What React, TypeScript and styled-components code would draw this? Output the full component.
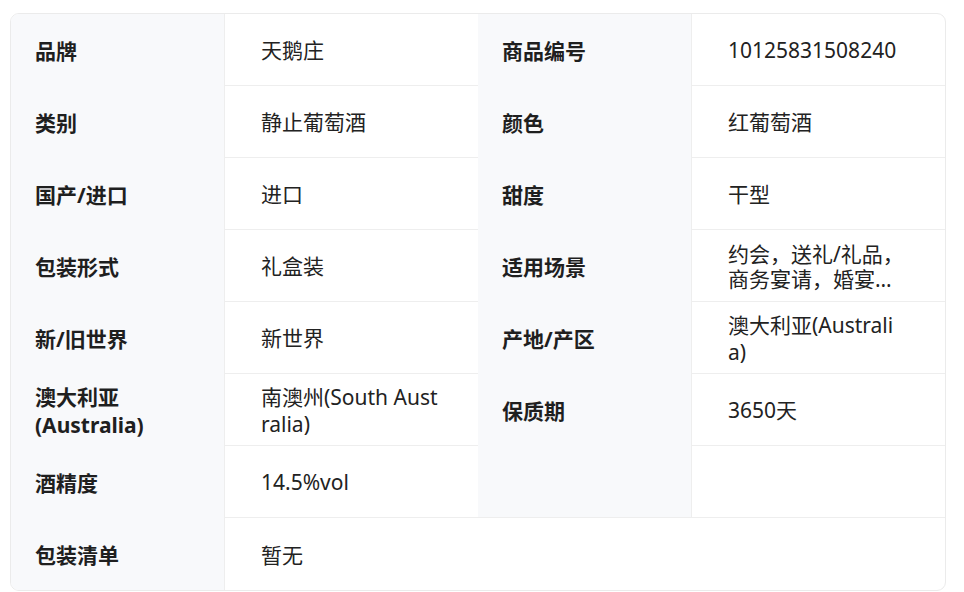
import React from 'react';
import styled, { createGlobalStyle } from 'styled-components';

type Spec = { label: string; value: string; clamp?: boolean };

const items: (Spec | null)[] = [
  { label: '品牌', value: '天鹅庄' },
  { label: '商品编号', value: '10125831508240' },
  { label: '类别', value: '静止葡萄酒' },
  { label: '颜色', value: '红葡萄酒' },
  { label: '国产/进口', value: '进口' },
  { label: '甜度', value: '干型' },
  { label: '包装形式', value: '礼盒装' },
  { label: '适用场景', value: '约会，送礼/礼品，商务宴请，婚宴，节日庆典', clamp: true },
  { label: '新/旧世界', value: '新世界' },
  { label: '产地/产区', value: '澳大利亚(Australia)' },
  { label: '澳大利亚(Australia)', value: '南澳州(South Australia)' },
  { label: '保质期', value: '3650天' },
  { label: '酒精度', value: '14.5%vol' },
  null,
];

const GlobalStyle = createGlobalStyle`
  body {
    margin: 0;
    background: #ffffff;
    font-family: "Noto Sans", "Noto Sans CJK SC", sans-serif;
    color: #222222;
  }
`;

const Table = styled.div`
  margin: 13px 0 0 10px;
  width: 936px;
  box-sizing: border-box;
  border: 1px solid #ebebeb;
  border-radius: 9px;
  overflow: hidden;
  display: grid;
  grid-template-columns: 1fr 1fr;
`;

const Item = styled.div<{ $wide?: boolean }>`
  display: flex;
  height: 72px;
  grid-column: ${(p) => (p.$wide ? 'span 2' : 'auto')};
`;

const Label = styled.div<{ $line?: boolean }>`
  flex: none;
  width: 213px;
  box-sizing: border-box;
  padding: 3px 24px 0;
  display: flex;
  align-items: center;
  background: #f8f9fb;
  font-size: 21px;
  font-weight: 700;
  line-height: 1.3;
  color: #1f1f1f;
  border-bottom: ${(p) => (p.$line ? '1px solid #eeeeee' : 'none')};
`;

const Value = styled.div<{ $last?: boolean }>`
  flex: 1;
  min-width: 0;
  box-sizing: border-box;
  padding: 3px 36px 0;
  display: flex;
  align-items: center;
  border-left: 1px solid #eeeeee;
  border-bottom: ${(p) => (p.$last ? 'none' : '1px solid #eeeeee')};
  font-size: 21px;
  line-height: 1.3;
  color: #222222;
  word-break: break-all;
`;

const Clamp = styled.span`
  display: -webkit-box;
  -webkit-box-orient: vertical;
  -webkit-line-clamp: 2;
  overflow: hidden;
  line-height: 25px;
`;

export default function App() {
  return (
    <>
      <GlobalStyle />
      <Table>
        {items.map((it, i) =>
          it ? (
            <Item key={i}>
              <Label>{it.label}</Label>
              <Value>{it.clamp ? <Clamp>{it.value}</Clamp> : <span>{it.value}</span>}</Value>
            </Item>
          ) : (
            <Item key={i}>
              <Label $line />
              <Value />
            </Item>
          )
        )}
        <Item $wide>
          <Label>包装清单</Label>
          <Value $last>暂无</Value>
        </Item>
      </Table>
    </>
  );
}
